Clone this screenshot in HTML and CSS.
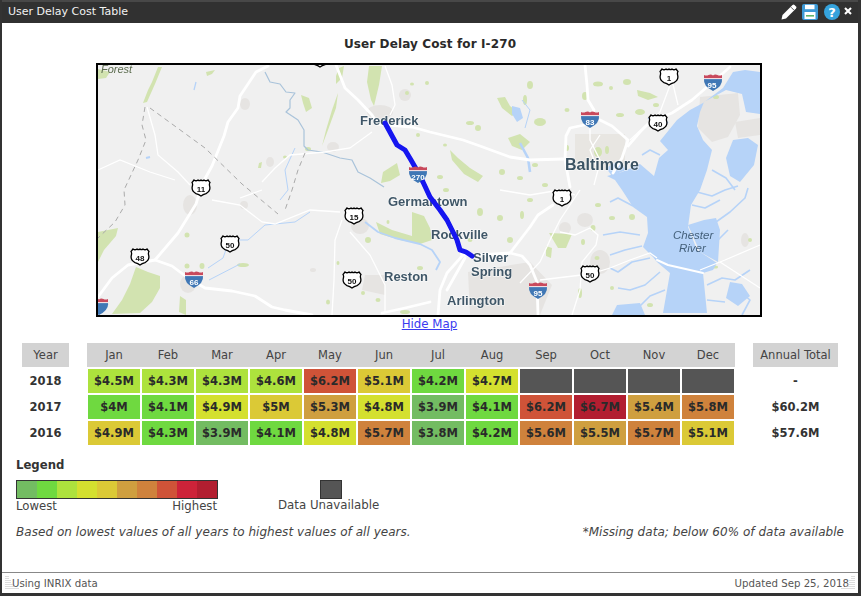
FILE: index.html
```html
<!DOCTYPE html>
<html lang="en">
<head>
<meta charset="utf-8">
<title>User Delay Cost Table</title>
<link rel="stylesheet" href="styles.css">
</head>
<body>
<div class="window">
  <header class="titlebar">
    <span class="titlebar-text">User Delay Cost Table</span>
    <div class="tools">
      <svg class="tool-pencil" width="16" height="16" viewBox="0 0 16 16"><path d="M0.5 15.5 L1.5 11 L11.5 1 Q12.5 0 13.5 1 L15 2.5 Q16 3.5 15 4.5 L5 14.5 Z" fill="#fff"/><path d="M10 3.2 L12.8 6" stroke="#333" stroke-width="0.8"/></svg>
      <svg class="tool-save" width="16" height="16" viewBox="0 0 16 16"><rect x="0" y="0" width="16" height="16" rx="2" fill="#3d9ad6"/><rect x="3" y="0.8" width="9.5" height="4.4" fill="#fff"/><rect x="2.5" y="8" width="11" height="7" fill="#fff"/><rect x="4" y="11" width="8" height="1.6" fill="#62b56a"/></svg>
      <svg class="tool-help" width="16" height="16" viewBox="0 0 16 16"><circle cx="8" cy="8" r="8" fill="#35a3dd"/><text x="8" y="12.6" text-anchor="middle" class="help-mark">?</text></svg>
      <svg class="tool-close" width="8" height="8" viewBox="0 0 8 8"><path d="M1 1 L7 7 M7 1 L1 7" stroke="#fff" stroke-width="2.1"/></svg>
    </div>
  </header>

  <main class="content">
    <h1 class="heading">User Delay Cost for I-270</h1>

    <div class="map">
      <svg class="map-svg" width="662" height="250" viewBox="98 65 662 250">
        <defs>
          <filter id="soft" x="-2%" y="-2%" width="104%" height="104%"><feGaussianBlur stdDeviation="0.4"/></filter>
          <symbol id="us" viewBox="0 0 20 18">
            <path d="M3 1 Q5 2.5 7 1 Q8.5 2.3 10 1 Q11.5 2.3 13 1 Q15 2.5 17 1 L19 3.5 Q18 5 18.6 7 Q20 12 15 14.6 Q12 15.4 10 17 Q8 15.4 5 14.6 Q0 12 1.4 7 Q2 5 1 3.5 Z" fill="#fff" stroke="#000" stroke-width="1.3"/>
          </symbol>
          <symbol id="int" viewBox="0 0 20 17">
            <path d="M1 5 L19 5 Q20 12 10 17 Q0 12 1 5 Z" fill="#3f77b5"/>
            <path d="M1 1 Q3.5 2 5.5 1 Q8 0 10 1.4 Q12 0 14.5 1 Q16.5 2 19 1 L19 5 L1 5 Z" fill="#c8485c"/>
            <rect x="1" y="4.2" width="18" height="0.9" fill="#fff"/>
          </symbol>
        </defs>

        <g filter="url(#soft)">
          <rect x="98" y="65" width="662" height="250" fill="#f0f0f0"/>

          <!-- urban grey -->
          <g fill="#e6e4e2">
            <rect x="575" y="134" width="50" height="36" fill="#e8e6e2"/>
            <path d="M468 272 L530 262 L552 285 L540 315 L470 315 Z"/>
            <path d="M700 97 L738 93 L740 115 L728 137 L712 142 L698 128 Z"/>
            <path d="M735 122 L760 118 L760 135 L738 138 Z"/>
            <ellipse cx="380" cy="112" rx="13" ry="7"/>
            <ellipse cx="245" cy="104" rx="5" ry="6"/>
            <ellipse cx="190" cy="205" rx="7" ry="10"/>
            <ellipse cx="360" cy="226" rx="9" ry="8"/>
            <path d="M365 275 L385 275 L385 295 L362 290 Z"/>
            <ellipse cx="188" cy="284" rx="8" ry="9"/>
            <ellipse cx="333" cy="147" rx="6" ry="5"/>
            <ellipse cx="270" cy="162" rx="4" ry="5"/>
            <ellipse cx="405" cy="95" rx="6" ry="6"/>
            <ellipse cx="585" cy="220" rx="8" ry="7"/>
            <ellipse cx="565" cy="228" rx="6" ry="6"/>
            <ellipse cx="600" cy="262" rx="10" ry="12"/>
            <ellipse cx="745" cy="240" rx="4" ry="7"/>
            <ellipse cx="244" cy="205" rx="4" ry="4"/>
            <ellipse cx="313" cy="270" rx="3" ry="2"/>
          </g>

          <!-- green patches -->
          <g fill="#d2e3b0">
            <path d="M158 67 L162 67 L155 84 L147 102 L143 103 L148 90 L152 82 Z"/>
            <path d="M98 69 L110 72 L106 78 L98 79 Z"/>
            <path d="M206 72 L215 70 L212 74 L207 76 Z"/>
            <path d="M301 95 L309 98 L312 108 L306 112 L303 103 Z"/>
            <path d="M339 68 L344 66 L342 78 L336 84 L336 76 Z"/>
            <path d="M338 93 L336 108 L328 130 L322 146 L326 130 L332 110 Z"/>
            <path d="M369 66 L382 66 L379 85 L374 106 L371 100 L367 82 Z"/>
            <path d="M383 172 L397 163 L400 175 L390 181 L381 183 Z"/>
            <path d="M259 163 L262 162 L261 168 L258 168 Z"/>
            <ellipse cx="285" cy="157" rx="2" ry="1.5"/><ellipse cx="308" cy="149" rx="3" ry="2"/>
            <ellipse cx="407" cy="93" rx="2" ry="2"/><ellipse cx="418" cy="135" rx="2" ry="2"/>
            <ellipse cx="412" cy="84" rx="2" ry="1.5"/><ellipse cx="427" cy="83" rx="2" ry="2"/>
            <path d="M98 232 L118 228 L116 236 L104 250 L98 262 Z"/>
            <path d="M136 267 L148 272 L160 276 L160 288 L152 302 L140 313 L112 314 L122 300 L130 284 Z"/>
            <ellipse cx="243" cy="265" rx="6" ry="2"/>
            <ellipse cx="187" cy="235" rx="2.5" ry="2.5"/>
            <ellipse cx="187" cy="266" rx="2.5" ry="2.5"/><ellipse cx="202" cy="266" rx="2.5" ry="3"/>
            <path d="M180 296 L186 300 L186 315 L179 312 Z"/>
            <path d="M376 222 L392 230 L412 236 L412 212 L424 216 L430 228 L432 240 L420 244 L400 240 L380 234 Z"/>
            <ellipse cx="368" cy="240" rx="3" ry="3"/><ellipse cx="388" cy="222" rx="1.5" ry="2"/>
            <ellipse cx="378" cy="300" rx="2.5" ry="2"/><ellipse cx="328" cy="302" rx="2" ry="2.5"/>
            <ellipse cx="338" cy="263" rx="1.5" ry="2"/><ellipse cx="363" cy="293" rx="2" ry="2"/>
            <ellipse cx="405" cy="312" rx="5" ry="2"/><ellipse cx="420" cy="268" rx="3" ry="2"/>
            <!-- east -->
            <path d="M450 150 L458 158 L470 168 L483 176 L478 182 L464 174 L452 160 Z"/>
            <ellipse cx="470" cy="123" rx="4" ry="2"/><ellipse cx="478" cy="128" rx="3" ry="3"/>
            <ellipse cx="440" cy="177" rx="3" ry="2"/><ellipse cx="445" cy="145" rx="2" ry="1.5"/>
            <path d="M497 98 L505 97 L510 106 L518 112 L512 116 L502 108 Z"/>
            <ellipse cx="530" cy="85" rx="3" ry="4"/><ellipse cx="525" cy="100" rx="2" ry="5"/>
            <path d="M508 138 L520 134 L530 142 L522 150 L512 146 Z"/>
            <ellipse cx="540" cy="122" rx="6" ry="4"/><ellipse cx="567" cy="110" rx="2.5" ry="2"/>
            <ellipse cx="585" cy="96" rx="3" ry="4"/><ellipse cx="598" cy="84" rx="5" ry="2.5"/>
            <ellipse cx="627" cy="82" rx="4" ry="3"/>
            <path d="M637 90 L650 93 L658 97 L648 100 L638 96 Z"/>
            <ellipse cx="640" cy="112" rx="5" ry="3"/><ellipse cx="620" cy="115" rx="4" ry="2"/>
            <ellipse cx="656" cy="105" rx="3" ry="2"/><ellipse cx="567" cy="148" rx="2" ry="3"/>
            <ellipse cx="611" cy="88" rx="2" ry="2"/><ellipse cx="446" cy="190" rx="3" ry="2"/>
            <ellipse cx="535" cy="165" rx="3" ry="2"/><ellipse cx="502" cy="172" rx="3" ry="3"/>
            <ellipse cx="520" cy="178" rx="3" ry="2"/><ellipse cx="598" cy="152" rx="4" ry="5"/>
            <ellipse cx="607" cy="150" rx="2" ry="4"/><ellipse cx="545" cy="185" rx="3" ry="2"/>
            <ellipse cx="500" cy="218" rx="3" ry="3"/><ellipse cx="470" cy="240" rx="2.5" ry="2"/>
            <path d="M549 233 L572 234 L566 248 L558 248 Z"/>
            <path d="M546 246 L552 248 L551 258 L546 256 Z"/>
            <ellipse cx="632" cy="217" rx="3" ry="3"/><ellipse cx="593" cy="228" rx="2.5" ry="3"/>
            <ellipse cx="583" cy="242" rx="2" ry="3"/><ellipse cx="597" cy="258" rx="2.5" ry="2"/>
            <ellipse cx="612" cy="288" rx="2" ry="2"/><ellipse cx="580" cy="293" rx="2" ry="5"/>
            <ellipse cx="715" cy="267" rx="3" ry="1.5"/><ellipse cx="750" cy="240" rx="2" ry="2"/>
            <ellipse cx="522" cy="215" rx="2" ry="4"/><ellipse cx="510" cy="240" rx="3" ry="3"/>
            <ellipse cx="480" cy="212" rx="3" ry="4"/><ellipse cx="530" cy="200" rx="3" ry="2"/>
            <ellipse cx="598" cy="205" rx="3" ry="2"/><ellipse cx="612" cy="218" rx="3" ry="2"/>
            <ellipse cx="650" cy="305" rx="3" ry="2"/><ellipse cx="690" cy="133" rx="2" ry="2"/>
            <ellipse cx="725" cy="100" rx="0" ry="0"/><ellipse cx="716" cy="97" rx="3" ry="2"/>
          </g>

          <!-- water -->
          <g fill="#b6d3f8">
            <path d="M733 72 L745 70 L760 72 L760 114 L746 112 L742 94 L726 90 L704 102 L700 112 L697 126 L703 140 L712 150 L707 170 L700 190 L691 205 L688 227 L697 250 L717 263 L713 270 L703 273 L707 313 L663 313 L670 273 L657 262 L653 257 L643 247 L648 233 L647 217 L633 207 L622 190 L615 180 L607 176 L622 172 L640 164 L654 176 L659 158 L668 150 L660 141 L677 120 L690 110 L703 103 L723 88 Z"/>
            <path d="M688 225 L704 220 L716 218 L720 230 L718 262 L700 252 Z"/>
            <path d="M733 140 L748 138 L758 145 L754 165 L740 182 L730 176 L726 158 Z"/>
            <path d="M730 282 L742 284 L750 296 L738 306 L726 298 Z"/>
            <path d="M617 305 L640 303 L645 315 L612 315 Z"/>
            <path d="M512 106 L520 108 L523 118 L517 122 L512 114 Z"/>
            <path d="M606 168 L620 160 L626 170 L612 176 Z"/>
          </g>
          <g fill="none" stroke="#b6d3f8" stroke-width="1.6" stroke-linejoin="round">
            <path d="M640 235 L620 232 L603 235"/>
            <path d="M642 246 L625 250 L610 255"/>
            <path d="M650 258 L632 262 L618 272 L610 268"/>
            <path d="M660 272 L645 285 L630 290 L618 288"/>
            <path d="M665 290 L650 296 L640 306"/>
            <path d="M633 206 L618 198 L610 202"/>
            <path d="M697 192 L712 196 L725 190 L738 186"/>
            <path d="M692 205 L705 208 L720 200"/>
            <path d="M712 170 L726 178 L735 190"/>
            <path d="M716 222 L730 212 L745 198 L748 188"/>
            <path d="M718 240 L728 230"/>
            <path d="M707 285 L722 278 L735 280 L750 270"/>
            <path d="M707 300 L725 302"/>
            <path d="M648 118 L660 128 L668 122"/>
            <path d="M660 155 L650 150 L642 155"/>
            <path d="M738 290 L750 300 L742 315"/>
            <path d="M525 128 L530 110 L522 100" stroke-width="1"/>
            <path d="M520 143 L528 158 L530 172" stroke-width="2.6"/>
            <path d="M228 240 L248 240 L265 225 L295 222 L310 212" stroke-width="1"/>
            <path d="M208 268 L223 258 L228 244" stroke-width="1"/>
            <path d="M240 264 L209 280" stroke-width="1"/>
            <path d="M150 157 L146 158" stroke-width="2"/>
            <path d="M196 82 L194 90" stroke-width="1.3"/>
            <path d="M295 148 L285 170 L288 190 L280 200" stroke-width="1"/>
            <path d="M365 222 L378 232 L395 238 L420 244 L432 250 L440 262 L436 270" stroke-width="1.8"/>
            <path d="M265 72 L270 82 L280 84 L286 92 L295 93 L290 100 L290 108 L286 112 L298 120 L304 130 L304 146 L308 150 L322 152 L340 158 L352 160 L358 172 L370 178 L384 187" stroke="#a9c3da" stroke-width="1.2"/>
          </g>

          <!-- thin roads -->
          <g fill="none" stroke="#fff" stroke-width="1.3">
            <path d="M98 170 L120 160 L150 172 L175 180"/>
            <path d="M147 107 L155 135 L158 155 L178 172 L190 185"/>
            <path d="M212 200 L240 205 L262 222 L275 224 L310 210 L340 212"/>
            <path d="M262 190 L240 198"/>
            <path d="M262 182 L275 168 L290 155 L325 152 L350 148 L372 132"/>
            <path d="M385 66 L392 85 L395 105 L390 115"/>
            <path d="M342 220 L335 240 L334 280 L332 315"/>
            <path d="M350 232 L370 255 L385 285 L385 312"/>
            <path d="M600 135 L590 150 L598 170 L594 185"/>
            <path d="M630 140 L660 112 L672 80 L678 105"/>
            <path d="M590 125 L590 140 L600 160"/>
            <path d="M580 190 L570 205 L560 220 L550 240 L540 262 L520 283"/>
            <path d="M560 232 L575 235 L590 228 L598 235 L596 245 L582 262 L580 290 L572 315"/>
            <path d="M540 280 L590 274 L610 268 L630 260 L650 253 L657 258"/>
            <path d="M700 270 L725 260 L760 245"/>
            <path d="M720 262 L760 288"/>
            <path d="M500 190 L530 195 L560 190 L575 195"/>
          </g>
          <!-- major roads -->
          <g fill="none" stroke="#fff" stroke-width="2.8" stroke-linejoin="round" stroke-linecap="round">
            <path d="M268 66 L256 72 L240 96 L238 108 L228 122 L224 136 L212 166 L202 184 L196 204 L178 233 L155 260 L128 265 L112 278 L98 297"/>
            <path d="M155 260 L172 266 L188 278 L205 288 L232 291 L255 296 L272 307 L285 310 L312 315"/>
            <path d="M336 65 L345 88 L358 100 L372 115 L378 124 L400 126 L412 127 L430 132 L463 140 L480 146 L510 157 L530 160 L563 159"/>
            <path d="M585 65 L587 85 L588 100 L594 110 L589 124"/>
            <path d="M589 124 L570 128 L566 136 L565 160 L570 187"/>
            <path d="M600 120 L612 126 L628 140 L622 158 L613 173"/>
            <path d="M628 146 L640 132 L650 122 L672 113 L692 100 L707 87 L730 67"/>
            <path d="M553 205 L538 215 L530 227 L520 240 L510 253 L522 256 L530 265 L537 282 L538 315"/>
            <path d="M510 253 L480 255 L463 255 L447 273 L440 290 L438 315"/>
            <path d="M382 313 L405 308 L430 302"/>
            <path d="M385 123 L397 145 L405 150 L415 167 L430 197 L447 220 L457 240 L462 255"/>
            <path d="M465 258 L447 290"/>
            <path d="M657 260 L668 265 L690 270 L703 273" stroke-width="2"/>
          </g>
          <!-- dashed state lines -->
          <g fill="none" stroke="#aaa" stroke-width="1" stroke-dasharray="5 4">
            <path d="M150 108 L205 148 L242 184 L278 214"/>
            <path d="M145 107 L142 125 L146 140 L138 160 L124 190 L125 205 L115 222 L98 238"/>
            <path d="M305 153 L298 170 L292 190 L285 210"/>
          </g>

          <!-- labels -->
          <text x="360" y="125" class="label-m">Frederick</text>
          <text x="388" y="206" class="label-m">Germantown</text>
          <text x="431" y="239" class="label-m">Rockville</text>
          <text x="473" y="262" class="label-m">Silver</text>
          <text x="471" y="276" class="label-m">Spring</text>
          <text x="384" y="281" class="label-m">Reston</text>
          <text x="447" y="305" class="label-m">Arlington</text>
          <text x="565" y="170" class="label-l">Baltimore</text>
          <text x="673" y="239" class="label-i">Chester</text>
          <text x="679" y="252" class="label-i">River</text>
          <text x="101" y="73" class="label-forest">Forest</text>

          <!-- route -->
          <path d="M385 123 L391 134 L397 145 L405 150 L411 160 L415 167 L423 182 L430 197 L440 210 L447 220 L452 230 L457 240 L460 250 L466 252 L472 256" fill="none" stroke="#1212f0" stroke-width="5" stroke-linecap="round" stroke-linejoin="round"/>

          <!-- shields -->
          <g class="shield-text">
            <use href="#us" x="659" y="68" width="20" height="18"/><text x="669" y="81">1</text>
            <use href="#us" x="648" y="114" width="20" height="18"/><text x="658" y="127">40</text>
            <use href="#us" x="191" y="179" width="20" height="18"/><text x="201" y="192">11</text>
            <use href="#us" x="344" y="207" width="20" height="18"/><text x="354" y="220">15</text>
            <use href="#us" x="220" y="235" width="20" height="18"/><text x="230" y="248">50</text>
            <use href="#us" x="130" y="248" width="20" height="18"/><text x="140" y="261">48</text>
            <use href="#us" x="342" y="271" width="20" height="18"/><text x="352" y="284">50</text>
            <use href="#us" x="552" y="189" width="20" height="18"/><text x="562" y="202">1</text>
            <use href="#us" x="580" y="265" width="20" height="18"/><text x="590" y="278">50</text>
            <use href="#us" x="310" y="50" width="20" height="18"/>
          </g>
          <g class="shield-int">
            <use href="#int" x="580" y="111" width="20" height="17"/><text x="590" y="125">83</text>
            <use href="#int" x="703" y="74" width="20" height="17"/><text x="712" y="88">95</text>
            <use href="#int" x="408" y="166" width="20" height="17"/><text x="418" y="180">270</text>
            <use href="#int" x="184" y="271" width="20" height="17"/><text x="194" y="285">66</text>
            <use href="#int" x="528" y="282" width="20" height="17"/><text x="538" y="296">95</text>
            <use href="#int" x="89" y="298" width="20" height="17"/>
          </g>
        </g>
      </svg>
    </div>
    <a class="hide-link" href="#">Hide Map</a>

    <section class="cost-table">
      <div class="col-year">
        <div class="head">Year</div>
        <div class="year">2018</div>
        <div class="year">2017</div>
        <div class="year">2016</div>
      </div>
      <div class="col-months">
        <div class="month-head">
          <div>Jan</div><div>Feb</div><div>Mar</div><div>Apr</div><div>May</div><div>Jun</div><div>Jul</div><div>Aug</div><div>Sep</div><div>Oct</div><div>Nov</div><div>Dec</div>
        </div>
        <div class="month-row">
          <div class="c3">$4.5M</div><div class="c3">$4.3M</div><div class="c3">$4.3M</div><div class="c3">$4.6M</div><div class="c8">$6.2M</div><div class="c5">$5.1M</div><div class="c2">$4.2M</div><div class="c4">$4.7M</div><div class="na"></div><div class="na"></div><div class="na"></div><div class="na"></div>
        </div>
        <div class="month-row">
          <div class="c2">$4M</div><div class="c2">$4.1M</div><div class="c4">$4.9M</div><div class="c5">$5M</div><div class="c6">$5.3M</div><div class="c4">$4.8M</div><div class="c1">$3.9M</div><div class="c2">$4.1M</div><div class="c8">$6.2M</div><div class="c10">$6.7M</div><div class="c6">$5.4M</div><div class="c7">$5.8M</div>
        </div>
        <div class="month-row">
          <div class="c5">$4.9M</div><div class="c2">$4.3M</div><div class="c1">$3.9M</div><div class="c2">$4.1M</div><div class="c4">$4.8M</div><div class="c7">$5.7M</div><div class="c1">$3.8M</div><div class="c2">$4.2M</div><div class="c7">$5.6M</div><div class="c6">$5.5M</div><div class="c7">$5.7M</div><div class="c5">$5.1M</div>
        </div>
      </div>
      <div class="col-total">
        <div class="head">Annual Total</div>
        <div class="total dash">-</div>
        <div class="total">$60.2M</div>
        <div class="total">$57.6M</div>
      </div>
    </section>

    <section class="legend">
      <h2 class="legend-title">Legend</h2>
      <div class="legend-row">
        <div class="scale">
          <div class="scale-bar">
            <span class="c1"></span><span class="c2"></span><span class="c3"></span><span class="c4"></span><span class="c5"></span><span class="c6"></span><span class="c7"></span><span class="c8"></span><span class="c9"></span><span class="c10"></span>
          </div>
          <div class="scale-labels"><span>Lowest</span><span>Highest</span></div>
        </div>
        <div class="unavailable">
          <span class="swatch"></span>
          <span class="unavailable-text">Data Unavailable</span>
        </div>
      </div>
      <div class="notes">
        <em>Based on lowest values of all years to highest values of all years.</em>
        <em>*Missing data; below 60% of data available</em>
      </div>
    </section>
  </main>

  <footer class="statusbar">
    <span>Using INRIX data</span>
    <span>Updated Sep 25, 2018</span>
    <svg class="grip grip-left" width="16" height="16" viewBox="0 0 16 16"><path d="M1 1v14M3 1v14M5 5v10M7 9v6M9 11v4M11 13v2M13 13v2" stroke="#bbb" stroke-width="1" stroke-dasharray="1 1"/></svg>
    <svg class="grip grip-right" width="16" height="16" viewBox="0 0 16 16"><path d="M15 1v14M13 1v14M11 5v10M9 9v6M7 11v4M5 13v2M3 13v2" stroke="#bbb" stroke-width="1" stroke-dasharray="1 1"/></svg>
  </footer>
</div>
</body>
</html>
```

FILE: styles.css
```css
* { box-sizing: border-box; }
html, body { margin: 0; padding: 0; }
body {
  width: 861px;
  height: 596px;
  overflow: hidden;
  background: #333;
  font-family: "DejaVu Sans", Verdana, sans-serif;
  color: #333;
}
.window {
  width: 861px;
  height: 596px;
  display: flex;
  flex-direction: column;
  background: #fff;
  border-left: 2px solid #333;
  border-right: 3px solid #333;
  border-bottom: 3px solid #333;
}
.titlebar {
  height: 23px;
  flex: none;
  display: flex;
  align-items: center;
  justify-content: space-between;
  background: #313131;
  border-top: 2px solid #484848;
  color: #f2f2f2;
  font-size: 11px;
  padding-left: 6px;
}
.titlebar-text { position: relative; top: -1px; }
.tools {
  display: flex;
  align-items: center;
  margin-right: 6px;
  position: relative;
  top: -0.5px;
}
.tool-save { margin-left: 5px; }
.tool-help { margin-left: 6px; }
.tool-close { margin-left: 4px; margin-top: -2px; }
.help-mark {
  font: bold 13px "DejaVu Sans", sans-serif;
  fill: #fff;
}
.content {
  flex: 1;
  display: flex;
  flex-direction: column;
  position: relative;
}
.heading {
  margin: 14px 0 0;
  text-align: center;
  font-size: 12px;
  letter-spacing: 0.12px;
  line-height: 15px;
  font-weight: bold;
  color: #2a2a2a;
  height: 26px;
}
.map {
  width: 666px;
  height: 254px;
  margin-left: 94px;
  border: 2px solid #000;
  flex: none;
}
.map-svg { display: block; }
.label-m {
  font: bold 13px "Liberation Sans", sans-serif;
  fill: #3f5767;
  paint-order: stroke;
  stroke: rgba(255,255,255,.6);
  stroke-width: 1.5px;
}
.label-l {
  font: bold 16px "Liberation Sans", sans-serif;
  fill: #3b5364;
  paint-order: stroke;
  stroke: rgba(255,255,255,.6);
  stroke-width: 1.5px;
}
.label-i {
  font: italic 11.5px "Liberation Sans", sans-serif;
  fill: #44607a;
}
.label-forest {
  font: italic 11px "Liberation Sans", sans-serif;
  fill: #5d6d50;
}
.shield-text text {
  font: bold 8px "Liberation Sans", sans-serif;
  fill: #111;
  text-anchor: middle;
}
.shield-int text {
  font: bold 8px "Liberation Sans", sans-serif;
  fill: #fff;
  text-anchor: middle;
}
.hide-link {
  display: block;
  text-align: center;
  font-size: 11.8px;
  line-height: 14px;
  color: #3b3bf0;
  margin-left: -1px;
  margin-bottom: 12px;
}
.cost-table {
  display: flex;
  margin-left: 20px;
  font-size: 11.5px;
}
.col-year { width: 47px; margin-right: 18px; }
.col-months { width: 648px; margin-right: 18px; }
.col-total { width: 85px; }
.head, .month-head > div {
  height: 24px;
  line-height: 24px;
  background: #d3d3d3;
  text-align: center;
  color: #444;
  font-size: 11.5px;
}
.year, .total {
  height: 24px;
  margin-top: 2px;
  line-height: 24px;
  text-align: center;
  font-weight: bold;
  color: #333;
}
.month-head, .month-row {
  display: grid;
  grid-template-columns: repeat(12, 54px);
}
.month-row { margin-top: 2px; }
.month-row > div {
  height: 24px;
  margin: 0 1px;
  line-height: 24px;
  text-align: center;
  font-weight: bold;
  color: #2a2a2a;
}
.c1 { background: #73bc62; }
.c2 { background: #6fd940; }
.c3 { background: #ade23d; }
.c4 { background: #d4e02f; }
.c5 { background: #dbc936; }
.c6 { background: #cf9f3f; }
.c7 { background: #cf823c; }
.c8 { background: #cf5338; }
.c9 { background: #cd2339; }
.c10 { background: #b21e30; }
.na { background: #555; }
.legend {
  margin: 0 14px;
  font-size: 11.5px;
}
.legend-title {
  margin: 13px 0 0;
  font-size: 11.7px;
  line-height: 15px;
  font-weight: bold;
  color: #333;
}
.legend-row {
  display: flex;
  margin-top: 7px;
}
.scale { width: 202px; }
.scale-bar {
  display: flex;
  height: 19px;
  border: 1px solid #333;
}
.scale-bar span { flex: 1; }
.scale-labels {
  display: flex;
  justify-content: space-between;
  line-height: 13px;
  margin-top: 1px;
  padding-right: 1px;
  color: #444;
  font-size: 11.7px;
}
.unavailable {
  margin-left: 60px;
  width: 102px;
  display: flex;
  flex-direction: column;
  color: #444;
  line-height: 13px;
}
.swatch {
  width: 22px;
  height: 19px;
  margin-left: 42px;
  background: #555;
  border: 1px solid #333;
  flex: none;
}
.unavailable-text {
  font-size: 11.8px;
  white-space: nowrap;
}
.notes {
  display: flex;
  justify-content: space-between;
  margin-top: 12px;
  line-height: 14px;
  color: #444;
  font-size: 12px;
  letter-spacing: 0.04px;
}
.statusbar {
  height: 21px;
  flex: none;
  border-top: 1px solid #888;
  display: flex;
  align-items: center;
  justify-content: space-between;
  padding: 0 9px 0 10px;
  font-size: 10.2px;
  color: #555;
  position: relative;
}
.grip { position: absolute; top: 2px; }
.grip-left { left: 3px; }
.grip-right { right: 3px; }
```
